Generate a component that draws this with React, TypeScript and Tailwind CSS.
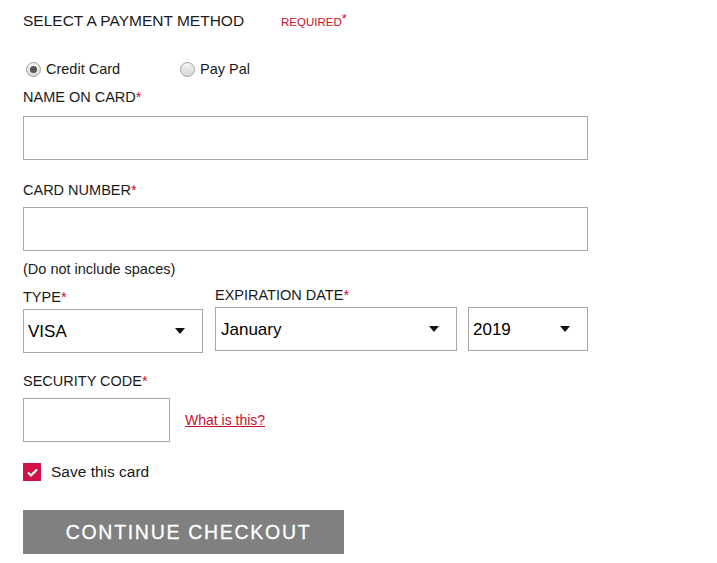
import { useState } from 'react';

const font = { fontFamily: '"Liberation Sans", Arial, sans-serif' };

const Star = () => <span className="text-[#c8102e]">*</span>;

const Label = ({ children, className = '' }: { children: React.ReactNode; className?: string }) => (
  <div className={`text-[14.5px] leading-[18px] text-[#1a1a1a] ${className}`}>
    {children}
    <Star />
  </div>
);

const Caret = () => (
  <svg width="10" height="6" viewBox="0 0 10 6" className="shrink-0">
    <path d="M0 0h10L5 6z" fill="#111" />
  </svg>
);

const Select = ({ value, className = '' }: { value: string; className?: string }) => (
  <div
    className={`flex h-[44px] items-center justify-between border border-[#a8a8a8] bg-white pl-[4px] pr-[17px] text-[17px] text-black ${className}`}
  >
    <span>{value}</span>
    <Caret />
  </div>
);

const Radio = ({ checked, label }: { checked: boolean; label: string }) => (
  <label className="flex items-center gap-[5px] text-[14.5px] text-[#1a1a1a]">
    <span className="flex size-[15px] items-center justify-center rounded-full border border-[#a0a0a0] bg-gradient-to-b from-[#f4f4f4] to-[#d8d8d8]">
      {checked && <span className="size-[7px] rounded-full bg-[#555]" />}
    </span>
    {label}
  </label>
);

export default function App() {
  const [save] = useState(true);
  return (
    <div className="min-h-[563px] w-[717px] bg-white pl-[23px] pt-[11px]" style={font}>
      <div className="flex items-baseline">
        <h2 className="w-[258px] text-[15.5px] leading-[20px] text-[#1a1a1a]">SELECT A PAYMENT METHOD</h2>
        <span className="text-[11.5px] text-[#c8102e]">
          REQUIRED<span className="relative -top-[3px] text-[13px]">*</span>
        </span>
      </div>

      <div className="mt-[27px] flex items-center pl-[3px]">
        <div className="w-[154px]">
          <Radio checked label="Credit Card" />
        </div>
        <Radio checked={false} label="Pay Pal" />
      </div>

      <Label className="mt-[8px]">NAME ON CARD</Label>
      <div className="mt-[10px] h-[44px] w-[565px] border border-[#a8a8a8] bg-white" />

      <Label className="mt-[21px]">CARD NUMBER</Label>
      <div className="mt-[8px] h-[44px] w-[565px] border border-[#a8a8a8] bg-white" />

      <div className="mt-[9px] text-[14.5px] leading-[18px] text-[#1a1a1a]">(Do not include spaces)</div>

      <div className="mt-[8px] flex">
        <div className="w-[180px]">
          <Label className="mt-[2px]">TYPE</Label>
          <Select value="VISA" className="mt-[3px] w-[180px]" />
        </div>
        <div className="ml-[12px] w-[242px]">
          <Label>EXPIRATION DATE</Label>
          <Select value="January" className="mt-[3px] w-[242px] pl-[5px]" />
        </div>
        <div className="ml-[11px] flex w-[120px] flex-col justify-end">
          <Select value="2019" className="mb-[2px] w-[120px] pl-[4px]" />
        </div>
      </div>

      <Label className="mt-[19px]">SECURITY CODE</Label>
      <div className="mt-[8px] flex items-center">
        <div className="h-[44px] w-[147px] border border-[#a8a8a8] bg-white" />
        <a href="#" className="ml-[15px] text-[14px] text-[#c8102e] underline">
          What is this?
        </a>
      </div>

      <label className="mt-[21px] flex items-center text-[15.5px] leading-[18px] text-[#1a1a1a]">
        <span className="flex size-[18px] items-center justify-center bg-[#d2114a]">
          {save && (
            <svg width="11" height="9" viewBox="0 0 11 9">
              <path d="M1 4.5l3 3L10 1.5" stroke="#fff" strokeWidth="2.2" fill="none" />
            </svg>
          )}
        </span>
        <span className="ml-[10px]">Save this card</span>
      </label>

      <button className="mt-[29px] flex h-[44px] w-[321px] items-center justify-center bg-[#808080] pl-[10px] pt-[1px] text-[19.5px] tracking-[1.7px] text-white [-webkit-text-stroke:0.3px_white]">
        CONTINUE CHECKOUT
      </button>
    </div>
  );
}
